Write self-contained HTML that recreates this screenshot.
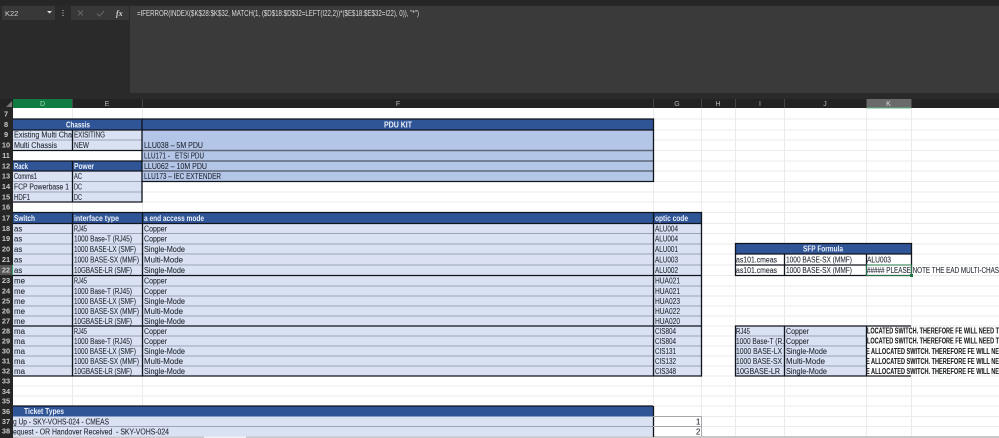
<!DOCTYPE html>
<html><head><meta charset="utf-8"><style>
html,body{margin:0;padding:0;background:#fff;width:999px;height:438px;overflow:hidden}
svg{display:block;filter:blur(.35px)}
text{font-family:"Liberation Sans",sans-serif;font-size:8.7px;fill:#262b36;stroke:#262b36;stroke-width:.1px;white-space:pre}
.h{font-weight:bold;fill:#eef2fa;stroke:none}
.n{font-size:7.4px;fill:#c8c8c8;stroke:none;font-weight:bold;text-anchor:middle}
.c{font-size:7px;fill:#b5b5b5;stroke:none;text-anchor:middle}
.b{font-weight:bold;fill:#1c1c1c;font-size:8px}
.f{fill:#dcdcdc;stroke:none;font-size:8.7px}
.s{font-size:7.8px}
</style></head><body>
<svg width="999" height="438" viewBox="0 0 999 438" xmlns="http://www.w3.org/2000/svg" shape-rendering="crispEdges" xml:space="preserve">
<rect width="999" height="438" fill="#fff"/>
<rect width="999" height="99" fill="#2a2a2a"/>
<rect width="999" height="5" fill="#262626"/>
<rect y="99" width="999" height="9" fill="#232323"/>
<rect x="0" y="108" width="13" height="330" fill="#262626"/>
<rect x="2" y="6" width="53" height="14" fill="#383838"/>
<rect x="71" y="6" width="58" height="14" fill="#383838"/>
<rect x="130" y="6" width="869" height="87" fill="#3a3a3a"/>
<text x="5" y="16" style="fill:#d0d0d0;stroke:none;font-size:7.5px">K22</text>
<path d="M47 11h5l-2.500 2.500z" fill="#ddd" shape-rendering="auto"/>
<path d="M63 10v1M63 12.500v1M63 15v1" stroke="#ccc" stroke-width="1.200"/>
<path d="M78 10.500l5 5M83 10.500l-5 5" stroke="#666" stroke-width="1" fill="none" shape-rendering="auto"/>
<path d="M97 13.500l2.500 2.500 4.500-5" stroke="#666" stroke-width="1" fill="none" shape-rendering="auto"/>
<text x="116" y="16" style="fill:#d5d5d5;stroke:none;font-size:8px;font-style:italic;font-weight:bold;font-family:'Liberation Serif',serif">fx</text>
<text class="f" x="137" y="16" textLength="282" lengthAdjust="spacingAndGlyphs">=IFERROR(INDEX($K$28:$K$32, MATCH(1, ($D$18:$D$32=LEFT(I22,2))*($E$18:$E$32=I22), 0)), "*")</text>

<!-- column headers -->
<path d="M6 107l6-6v6z" fill="#777" shape-rendering="auto"/>
<rect x="13" y="99" width="59" height="9" fill="#107c41"/>
<rect x="866" y="99" width="45" height="9" fill="#6a6a6a"/>
<rect x="866" y="107.500" width="45" height="1" fill="#5fb58a"/>
<path d="M72.500 99v9M142.500 99v9M653.500 99v9M701.500 99v9M735.500 99v9M784.500 99v9M866.500 99v9M911.500 99v9" stroke="#444"/>
<text class="c" x="42.500" y="106" style="fill:#9fd8b8">D</text>
<text class="c" x="107" y="106">E</text>
<text class="c" x="398" y="106">F</text>
<text class="c" x="677" y="106">G</text>
<text class="c" x="718" y="106">H</text>
<text class="c" x="760" y="106">I</text>
<text class="c" x="825" y="106">J</text>
<text class="c" x="888.500" y="106" style="fill:#ddd">K</text>

<!-- gridlines -->
<g stroke="#ebebeb" stroke-width="1">
<path d="M72.500 108V438M142.500 108V438M653.500 108V438M701.500 108V438M735.500 108V438M784.500 108V438M866.500 108V438M911.500 108V438"/>
<path d="M13 119H999M13 130H999M13 140H999M13 150.500H999M13 161H999M13 171H999M13 181.500H999M13 192H999M13 202H999M13 212.500H999M13 223.500H999M13 233.500H999M13 244H999M13 254H999M13 265H999M13 275.500H999M13 286H999M13 296H999M13 306H999M13 316H999M13 326H999M13 336H999M13 346H999M13 356H999M13 366H999M13 376H999M13 386H999M13 396H999M13 406H999M13 416.500H999M13 426.500H999"/>
</g>
<rect x="13" y="436" width="986" height="2" fill="#c8c8c8"/>
<rect x="204" y="436.500" width="42" height="1.500" fill="#f2f2f2"/>

<!-- row 22 highlight -->
<rect x="0" y="265" width="12" height="10" fill="#555"/>
<rect x="12" y="265" width="1" height="10" fill="#2e9e63"/>

<!-- row numbers -->
<g>
<text class="n" x="6" y="116.500">7</text><text class="n" x="6" y="127">8</text><text class="n" x="6" y="137">9</text><text class="n" x="6" y="147.500">10</text><text class="n" x="6" y="158">11</text><text class="n" x="6" y="168.500">12</text><text class="n" x="6" y="178.500">13</text><text class="n" x="6" y="189">14</text><text class="n" x="6" y="199.500">15</text><text class="n" x="6" y="209.500">16</text><text class="n" x="6" y="220.500">17</text><text class="n" x="6" y="231">18</text><text class="n" x="6" y="241">19</text><text class="n" x="6" y="251.500">20</text><text class="n" x="6" y="262">21</text><text class="n" x="6" y="272.500">22</text><text class="n" x="6" y="283">23</text><text class="n" x="6" y="293.500">24</text><text class="n" x="6" y="303.500">25</text><text class="n" x="6" y="313.500">26</text><text class="n" x="6" y="323.500">27</text><text class="n" x="6" y="333.500">28</text><text class="n" x="6" y="343.500">29</text><text class="n" x="6" y="353.500">30</text><text class="n" x="6" y="363.500">31</text><text class="n" x="6" y="373.500">32</text><text class="n" x="6" y="383.500">33</text><text class="n" x="6" y="394">34</text><text class="n" x="6" y="403.500">35</text><text class="n" x="6" y="414">36</text><text class="n" x="6" y="424">37</text><text class="n" x="6" y="433.500">38</text>
</g>

<!-- fills -->
<rect x="13" y="119" width="129" height="11" fill="#2f5597"/>
<rect x="142" y="119" width="511" height="11" fill="#2f5597"/>
<rect x="13" y="130" width="129" height="20.500" fill="#d9e1f2"/>
<rect x="13" y="150.500" width="129" height="10.500" fill="#fff"/>
<rect x="13" y="161" width="129" height="10" fill="#2f5597"/>
<rect x="13" y="171" width="129" height="31" fill="#d9e1f2"/>
<rect x="142" y="130" width="511" height="51.500" fill="#b4c6e7"/>
<rect x="13" y="212.500" width="688" height="11" fill="#2f5597"/>
<rect x="13" y="223.500" width="688" height="152.500" fill="#d9e1f2"/>
<rect x="13" y="406" width="640" height="10.500" fill="#2f5597"/>
<rect x="13" y="416.500" width="640" height="20" fill="#d9e1f2"/>
<rect x="735" y="243.500" width="176" height="10.500" fill="#2f5597"/>
<rect x="735" y="326" width="131" height="50" fill="#d9e1f2"/>

<!-- light row lines -->
<g stroke="#9aa3b8" stroke-width="1">
<path d="M13 140H142M13 181.500H142M13 192H142"/>
<path d="M13 233.500H701M13 244H701M13 254H701M13 265H701M13 286H701M13 296H701M13 306H701M13 316H701M13 336H701M13 346H701M13 356H701M13 366H701"/>
<path d="M735 336H866M735 346H866M735 356H866M735 366H866M13 426.500H653"/>
</g>
<g stroke="#5f6778" stroke-width="1.500" shape-rendering="auto"><path d="M142 150.500H653M142 161H653M142 171H653"/></g>

<!-- black borders -->
<g stroke="#10141c" stroke-width="1.300" fill="none" shape-rendering="auto">
<path d="M13 119H142V202H13M72.500 130V150.500M72.500 161V202M13 130H142M13 150.500H142M13 161H142M13 171H142"/>
<path d="M142 119H653.500V181.500H142M142 130H653"/>
<path d="M13 212.500H701.500V376H13M72.500 212.500V376M142.500 212.500V376M653.500 212.500V376M13 223.500H701M13 275.500H701M13 326H701"/>
<path d="M13 406H653M653.500 406V437"/>
<path d="M735.500 243.500H911.500V275.500H735.500ZM735 254H911M735 265H866M784.500 254V275.500M866.500 254V275.500"/>
<path d="M911 326H735.500V376H911M784.500 326V376M866.500 326V376"/>
</g>
<path d="M653 416.500H701.500V436.500M653 426.500H701" stroke="#a8a8a8" fill="none"/>

<!-- selection -->
<rect x="866.500" y="265" width="45" height="10.500" fill="none" stroke="#217346" stroke-width="1"/>
<rect x="910" y="274" width="3" height="3" fill="#217346"/>

<!-- Chassis -->
<text class="h" x="66" y="127.500" textLength="24" lengthAdjust="spacingAndGlyphs">Chassis</text>
<text class="h" x="384" y="127.500" textLength="28" lengthAdjust="spacingAndGlyphs">PDU KIT</text>
<text x="14" y="137.500" textLength="58" lengthAdjust="spacingAndGlyphs">Existing Multi Cha</text>
<text x="74" y="137.500" textLength="31" lengthAdjust="spacingAndGlyphs">EXISITING</text>
<text x="14" y="148" textLength="43" lengthAdjust="spacingAndGlyphs">Multi Chassis</text>
<text x="74" y="148" textLength="15" lengthAdjust="spacingAndGlyphs">NEW</text>
<text class="h" x="14" y="169" textLength="14" lengthAdjust="spacingAndGlyphs">Rack</text>
<text class="h" x="74" y="169" textLength="20" lengthAdjust="spacingAndGlyphs">Power</text>
<text x="14" y="179" textLength="23" lengthAdjust="spacingAndGlyphs">Comms1</text>
<text x="74" y="179" textLength="8" lengthAdjust="spacingAndGlyphs">AC</text>
<text x="14" y="189.500" textLength="55" lengthAdjust="spacingAndGlyphs">FCP Powerbase 1</text>
<text x="74" y="189.500" textLength="8" lengthAdjust="spacingAndGlyphs">DC</text>
<text x="14" y="200" textLength="16" lengthAdjust="spacingAndGlyphs">HDF1</text>
<text x="74" y="200" textLength="8" lengthAdjust="spacingAndGlyphs">DC</text>

<!-- PDU -->
<text x="144" y="148" textLength="59" lengthAdjust="spacingAndGlyphs">LLU038 – 5M PDU</text>
<text x="144" y="158.500" textLength="60" lengthAdjust="spacingAndGlyphs">LLU171 -   ETSI PDU</text>
<text x="144" y="169" textLength="63" lengthAdjust="spacingAndGlyphs">LLU062 – 10M PDU</text>
<text x="144" y="179" textLength="77" lengthAdjust="spacingAndGlyphs">LLU173 – IEC EXTENDER</text>

<!-- main table header -->
<text class="h" x="14" y="221" textLength="21" lengthAdjust="spacingAndGlyphs">Switch</text>
<text class="h" x="74" y="221" textLength="45" lengthAdjust="spacingAndGlyphs">interface type</text>
<text class="h" x="144" y="221" textLength="60" lengthAdjust="spacingAndGlyphs">a end access mode</text>
<text class="h" x="655" y="221" textLength="33" lengthAdjust="spacingAndGlyphs">optic code</text>

<!-- D col -->
<text class="s" x="14" y="231.500">as</text><text class="s" x="14" y="241.500">as</text><text class="s" x="14" y="252">as</text><text class="s" x="14" y="262.500">as</text><text class="s" x="14" y="273">as</text>
<text class="s" x="14" y="283.500" textLength="11" lengthAdjust="spacingAndGlyphs">me</text><text class="s" x="14" y="294" textLength="11" lengthAdjust="spacingAndGlyphs">me</text><text class="s" x="14" y="304" textLength="11" lengthAdjust="spacingAndGlyphs">me</text><text class="s" x="14" y="314" textLength="11" lengthAdjust="spacingAndGlyphs">me</text><text class="s" x="14" y="324" textLength="11" lengthAdjust="spacingAndGlyphs">me</text>
<text class="s" x="14" y="334" textLength="11" lengthAdjust="spacingAndGlyphs">ma</text><text class="s" x="14" y="344" textLength="11" lengthAdjust="spacingAndGlyphs">ma</text><text class="s" x="14" y="354" textLength="11" lengthAdjust="spacingAndGlyphs">ma</text><text class="s" x="14" y="364" textLength="11" lengthAdjust="spacingAndGlyphs">ma</text><text class="s" x="14" y="374" textLength="11" lengthAdjust="spacingAndGlyphs">ma</text>

<!-- E col -->
<text x="74" y="231.500" textLength="13" lengthAdjust="spacingAndGlyphs">RJ45</text>
<text x="74" y="241.500" textLength="58" lengthAdjust="spacingAndGlyphs">1000 Base-T (RJ45)</text>
<text x="74" y="252" textLength="62" lengthAdjust="spacingAndGlyphs">1000 BASE-LX (SMF)</text>
<text x="74" y="262.500" textLength="65" lengthAdjust="spacingAndGlyphs">1000 BASE-SX (MMF)</text>
<text x="74" y="273" textLength="58" lengthAdjust="spacingAndGlyphs">10GBASE-LR (SMF)</text>
<text x="74" y="283.500" textLength="13" lengthAdjust="spacingAndGlyphs">RJ45</text>
<text x="74" y="294" textLength="58" lengthAdjust="spacingAndGlyphs">1000 Base-T (RJ45)</text>
<text x="74" y="304" textLength="62" lengthAdjust="spacingAndGlyphs">1000 BASE-LX (SMF)</text>
<text x="74" y="314" textLength="65" lengthAdjust="spacingAndGlyphs">1000 BASE-SX (MMF)</text>
<text x="74" y="324" textLength="58" lengthAdjust="spacingAndGlyphs">10GBASE-LR (SMF)</text>
<text x="74" y="334" textLength="13" lengthAdjust="spacingAndGlyphs">RJ45</text>
<text x="74" y="344" textLength="58" lengthAdjust="spacingAndGlyphs">1000 Base-T (RJ45)</text>
<text x="74" y="354" textLength="62" lengthAdjust="spacingAndGlyphs">1000 BASE-LX (SMF)</text>
<text x="74" y="364" textLength="65" lengthAdjust="spacingAndGlyphs">1000 BASE-SX (MMF)</text>
<text x="74" y="374" textLength="58" lengthAdjust="spacingAndGlyphs">10GBASE-LR (SMF)</text>

<!-- F col -->
<text x="144" y="231.500" textLength="23" lengthAdjust="spacingAndGlyphs">Copper</text>
<text x="144" y="241.500" textLength="23" lengthAdjust="spacingAndGlyphs">Copper</text>
<text x="144" y="252" textLength="41" lengthAdjust="spacingAndGlyphs">Single-Mode</text>
<text x="144" y="262.500" textLength="39" lengthAdjust="spacingAndGlyphs">Multi-Mode</text>
<text x="144" y="273" textLength="41" lengthAdjust="spacingAndGlyphs">Single-Mode</text>
<text x="144" y="283.500" textLength="23" lengthAdjust="spacingAndGlyphs">Copper</text>
<text x="144" y="294" textLength="23" lengthAdjust="spacingAndGlyphs">Copper</text>
<text x="144" y="304" textLength="41" lengthAdjust="spacingAndGlyphs">Single-Mode</text>
<text x="144" y="314" textLength="39" lengthAdjust="spacingAndGlyphs">Multi-Mode</text>
<text x="144" y="324" textLength="41" lengthAdjust="spacingAndGlyphs">Single-Mode</text>
<text x="144" y="334" textLength="23" lengthAdjust="spacingAndGlyphs">Copper</text>
<text x="144" y="344" textLength="23" lengthAdjust="spacingAndGlyphs">Copper</text>
<text x="144" y="354" textLength="41" lengthAdjust="spacingAndGlyphs">Single-Mode</text>
<text x="144" y="364" textLength="39" lengthAdjust="spacingAndGlyphs">Multi-Mode</text>
<text x="144" y="374" textLength="41" lengthAdjust="spacingAndGlyphs">Single-Mode</text>

<!-- G col -->
<text x="655" y="231.500" textLength="23" lengthAdjust="spacingAndGlyphs">ALU004</text>
<text x="655" y="241.500" textLength="23" lengthAdjust="spacingAndGlyphs">ALU004</text>
<text x="655" y="252" textLength="23" lengthAdjust="spacingAndGlyphs">ALU001</text>
<text x="655" y="262.500" textLength="23" lengthAdjust="spacingAndGlyphs">ALU003</text>
<text x="655" y="273" textLength="23" lengthAdjust="spacingAndGlyphs">ALU002</text>
<text x="655" y="283.500" textLength="25" lengthAdjust="spacingAndGlyphs">HUA021</text>
<text x="655" y="294" textLength="25" lengthAdjust="spacingAndGlyphs">HUA021</text>
<text x="655" y="304" textLength="25" lengthAdjust="spacingAndGlyphs">HUA023</text>
<text x="655" y="314" textLength="25" lengthAdjust="spacingAndGlyphs">HUA022</text>
<text x="655" y="324" textLength="25" lengthAdjust="spacingAndGlyphs">HUA020</text>
<text x="655" y="334" textLength="21" lengthAdjust="spacingAndGlyphs">CIS804</text>
<text x="655" y="344" textLength="21" lengthAdjust="spacingAndGlyphs">CIS804</text>
<text x="655" y="354" textLength="21" lengthAdjust="spacingAndGlyphs">CIS131</text>
<text x="655" y="364" textLength="21" lengthAdjust="spacingAndGlyphs">CIS132</text>
<text x="655" y="374" textLength="21" lengthAdjust="spacingAndGlyphs">CIS348</text>

<!-- Tickets -->
<text class="h" x="24" y="414" textLength="40" lengthAdjust="spacingAndGlyphs">Ticket Types</text>
<text x="13" y="424.500" textLength="96" lengthAdjust="spacingAndGlyphs">g Up - SKY-VOHS-024 - CMEAS</text>
<text x="13" y="434.500" textLength="156" lengthAdjust="spacingAndGlyphs">equest - OR Handover Received  - SKY-VOHS-024</text>
<text class="s" x="696" y="424.500">1</text>
<text class="s" x="696" y="434.500">2</text>

<!-- SFP Formula -->
<text class="h" x="803" y="251.500" textLength="40" lengthAdjust="spacingAndGlyphs">SFP Formula</text>
<text x="736" y="262.500" textLength="41" lengthAdjust="spacingAndGlyphs">as101.cmeas</text>
<text x="786" y="262.500" textLength="66" lengthAdjust="spacingAndGlyphs">1000 BASE-SX (MMF)</text>
<text x="867" y="262.500" textLength="24" lengthAdjust="spacingAndGlyphs">ALU003</text>
<text x="736" y="273" textLength="41" lengthAdjust="spacingAndGlyphs">as101.cmeas</text>
<text x="786" y="273" textLength="66" lengthAdjust="spacingAndGlyphs">1000 BASE-SX (MMF)</text>
<text x="867" y="273" textLength="132" lengthAdjust="spacingAndGlyphs">##### PLEASE NOTE THE EAD MULTI-CHAS</text>

<!-- Lower right -->
<text x="736" y="334" textLength="14" lengthAdjust="spacingAndGlyphs">RJ45</text>
<text x="736" y="344" textLength="48" lengthAdjust="spacingAndGlyphs">1000 Base-T (R.</text>
<text x="736" y="354" textLength="46" lengthAdjust="spacingAndGlyphs">1000 BASE-LX</text>
<text x="736" y="364" textLength="46" lengthAdjust="spacingAndGlyphs">1000 BASE-SX</text>
<text x="736" y="374" textLength="44" lengthAdjust="spacingAndGlyphs">10GBASE-LR</text>
<text x="786" y="334" textLength="23" lengthAdjust="spacingAndGlyphs">Copper</text>
<text x="786" y="344" textLength="23" lengthAdjust="spacingAndGlyphs">Copper</text>
<text x="786" y="354" textLength="41" lengthAdjust="spacingAndGlyphs">Single-Mode</text>
<text x="786" y="364" textLength="39" lengthAdjust="spacingAndGlyphs">Multi-Mode</text>
<text x="786" y="374" textLength="41" lengthAdjust="spacingAndGlyphs">Single-Mode</text>
<text class="b" x="867" y="333.500" textLength="132" lengthAdjust="spacingAndGlyphs">LOCATED SWITCH. THEREFORE FE WILL NEED T</text>
<text class="b" x="867" y="343.500" textLength="132" lengthAdjust="spacingAndGlyphs">LOCATED SWITCH. THEREFORE FE WILL NEED T</text>
<text class="b" x="866" y="354" textLength="133" lengthAdjust="spacingAndGlyphs">E ALLOCATED SWITCH. THEREFORE FE WILL NE</text>
<text class="b" x="866" y="364" textLength="133" lengthAdjust="spacingAndGlyphs">E ALLOCATED SWITCH. THEREFORE FE WILL NE</text>
<text class="b" x="866" y="374" textLength="133" lengthAdjust="spacingAndGlyphs">E ALLOCATED SWITCH. THEREFORE FE WILL NE</text>
</svg>
</body></html>
